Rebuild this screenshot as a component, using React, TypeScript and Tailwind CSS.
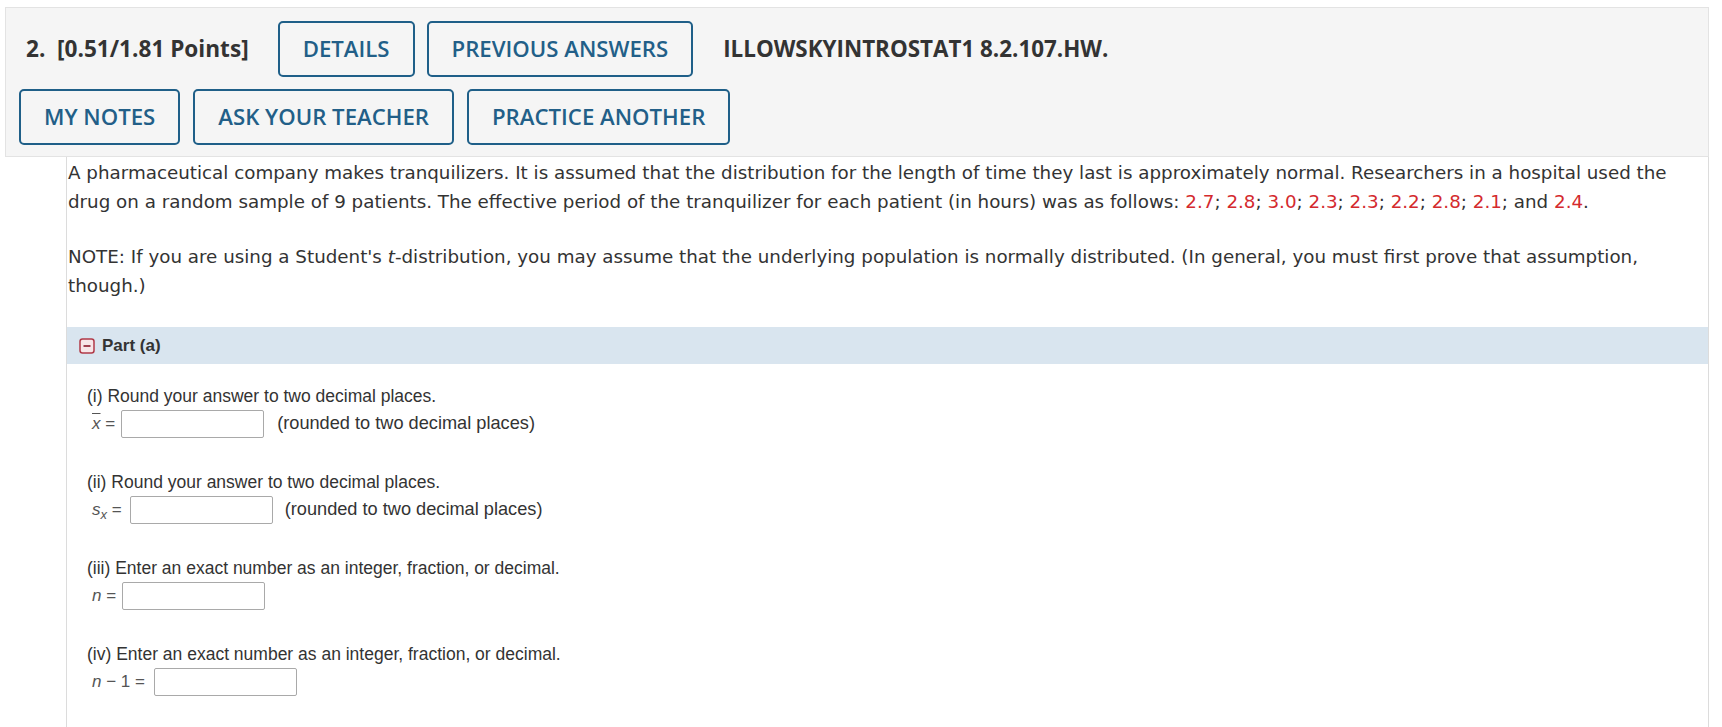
import type { ReactNode } from 'react';

function HeaderButton({ children }: { children: ReactNode }) {
  return (
    <button className="flex h-[56px] items-center rounded-[5px] border-2 border-[#1f5f88] bg-transparent px-[23px] text-[22.2px] font-semibold text-[#225f88]">
      {children}
    </button>
  );
}

function Red({ children }: { children: ReactNode }) {
  return <span className="text-[#d42a2e]">{children}</span>;
}

function AnswerBox() {
  return <input type="text" className="h-[28px] w-[143px] rounded-[2px] border border-[#a9a9a9] bg-white" />;
}

function CollapseIcon() {
  return (
    <svg width="16" height="16" viewBox="0 0 16 16" aria-hidden="true">
      <rect x="1" y="1" width="14" height="14" rx="2.5" fill="#f7e6e8" stroke="#b13a48" strokeWidth="1.5" />
      <line x1="4.5" y1="8" x2="11.5" y2="8" stroke="#8f2434" strokeWidth="1.7" />
    </svg>
  );
}

export default function App() {
  return (
    <div className="min-h-screen bg-white text-[#333]">
      {/* question header */}
      <div
        className="ml-[5px] mt-[7px] w-[1704px] border border-[#e3e3e3] bg-[#f5f5f5] px-[13px] pb-[11px] pt-[13px]"
        style={{ fontFamily: '"Open Sans", "Liberation Sans", sans-serif' }}
      >
        <div className="flex items-center">
          <span className="mr-[29px] pl-[7px] text-[22.6px] font-bold text-[#333]">2.&nbsp; [0.51/1.81 Points]</span>
          <div className="flex gap-[12px]">
            <HeaderButton>DETAILS</HeaderButton>
            <HeaderButton>PREVIOUS ANSWERS</HeaderButton>
          </div>
          <span className="ml-[30px] text-[22.4px] font-bold text-[#333]">ILLOWSKYINTROSTAT1 8.2.107.HW.</span>
        </div>
        <div className="mt-[12px] flex gap-[13px]">
          <HeaderButton>MY NOTES</HeaderButton>
          <HeaderButton>ASK YOUR TEACHER</HeaderButton>
          <HeaderButton>PRACTICE ANOTHER</HeaderButton>
        </div>
      </div>

      {/* question body */}
      <div className="ml-[66px] min-h-[570px] w-[1643px] border-x border-[#dcdcdc]">
        <div
          className="pl-[1px] pt-[2px] text-[18.3px] leading-[28.5px] text-[#333]"
          style={{ fontFamily: '"DejaVu Sans", Verdana, sans-serif' }}
        >
          <p className="whitespace-nowrap">
            A pharmaceutical company makes tranquilizers. It is assumed that the distribution for the length of time they last is approximately normal. Researchers in a hospital used the
            <br />
            drug on a random sample of 9 patients. The effective period of the tranquilizer for each patient (in hours) was as follows: <Red>2.7</Red>; <Red>2.8</Red>; <Red>3.0</Red>;{' '}
            <Red>2.3</Red>; <Red>2.3</Red>; <Red>2.2</Red>; <Red>2.8</Red>; <Red>2.1</Red>; and <Red>2.4</Red>.
          </p>
          <p className="mt-[27px] whitespace-nowrap">
            NOTE: If you are using a Student's <i>t</i>-distribution, you may assume that the underlying population is normally distributed. (In general, you must first prove that assumption,
            <br />
            though.)
          </p>
        </div>

        <div style={{ fontFamily: '"Liberation Sans", Arial, sans-serif' }}>
          <div className="mt-[27px] flex h-[37px] items-center gap-[7px] bg-[#d9e5ef] pl-[12px]">
            <CollapseIcon />
            <span className="text-[17px] font-bold text-[#333]">Part (a)</span>
          </div>

          <div className="pl-[20px] pt-[20px] text-[17.5px] text-[#333]">
            <div>
              <p className="leading-[24px]">(i) Round your answer to two decimal places.</p>
              <div className="flex h-[32px] items-center">
                <span className="ml-[5px] mr-[6px] text-[17px] text-[#555]">
                  <i className="overline">x</i> =
                </span>
                <AnswerBox />
                <span className="ml-[13px] text-[18.2px]">(rounded to two decimal places)</span>
              </div>
            </div>

            <div className="mt-[30px]">
              <p className="leading-[24px]">(ii) Round your answer to two decimal places.</p>
              <div className="flex h-[32px] items-center">
                <span className="ml-[5px] mr-[8px] text-[17px] text-[#555]">
                  <i>s</i>
                  <sub className="text-[13px]">
                    <i>x</i>
                  </sub>{' '}
                  =
                </span>
                <AnswerBox />
                <span className="ml-[12px] text-[18.2px]">(rounded to two decimal places)</span>
              </div>
            </div>

            <div className="mt-[30px]">
              <p className="leading-[24px]">(iii) Enter an exact number as an integer, fraction, or decimal.</p>
              <div className="flex h-[32px] items-center">
                <span className="ml-[5px] mr-[6px] text-[17px] text-[#555]">
                  <i>n</i> =
                </span>
                <AnswerBox />
              </div>
            </div>

            <div className="mt-[30px]">
              <p className="leading-[24px]">(iv) Enter an exact number as an integer, fraction, or decimal.</p>
              <div className="flex h-[32px] items-center">
                <span className="ml-[5px] mr-[9px] text-[17px] text-[#555]">
                  <i>n</i> &minus; 1 =
                </span>
                <AnswerBox />
              </div>
            </div>
          </div>
        </div>
      </div>
    </div>
  );
}
